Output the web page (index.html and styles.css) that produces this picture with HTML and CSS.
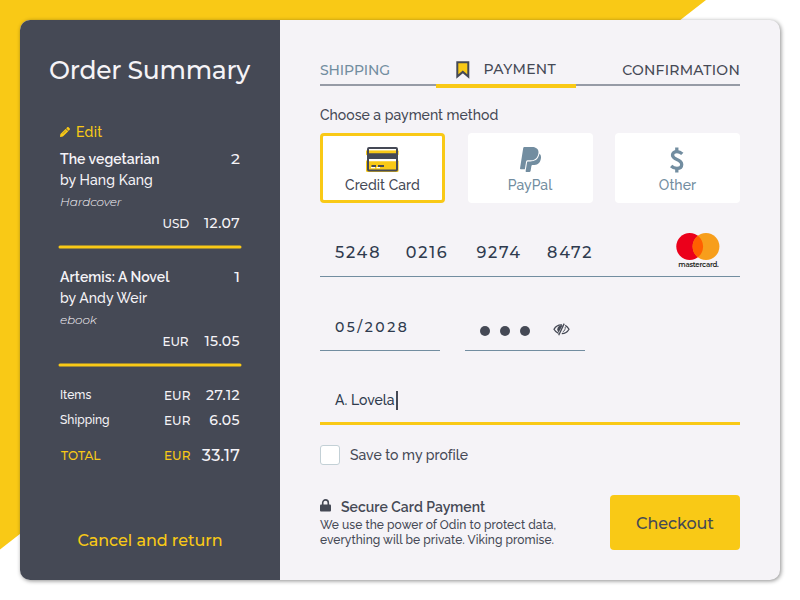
FILE: index.html
```html
<!DOCTYPE html>
<html lang="en">
<head>
<meta charset="utf-8">
<title>Checkout</title>
<link rel="stylesheet" href="styles.css">
</head>
<body>
<div class="card">
  <aside class="summary">
    <h1 class="title">Order Summary</h1>
    <a class="edit">
      <svg width="10" height="10" viewBox="0 0 512 512" fill="currentColor"><path d="M497.9 142.1l-46.1 46.1c-4.7 4.7-12.3 4.7-17 0l-111-111c-4.7-4.7-4.7-12.3 0-17l46.1-46.1c18.7-18.7 49.1-18.7 67.9 0l60.1 60.1c18.8 18.7 18.8 49.1 0 67.9zM284.2 99.8L21.6 362.4.4 483.9c-2.9 16.4 11.4 30.6 27.8 27.8l121.5-21.3 262.6-262.6c4.7-4.7 4.7-12.3 0-17l-111-111c-4.8-4.7-12.4-4.7-17.1 0z"/><path d="M145 345l165-165" stroke="#454955" stroke-width="22"/></svg>
      <span>Edit</span>
    </a>
    <section class="item">
      <div class="item-head"><span class="book">The vegetarian</span><span class="qty">2</span></div>
      <div class="author">by Hang Kang</div>
      <div class="format">Hardcover</div>
      <div class="price"><span class="cur">USD</span><span class="amount">12.07</span></div>
    </section>
    <section class="item">
      <div class="item-head"><span class="book">Artemis: A Novel</span><span class="qty">1</span></div>
      <div class="author">by Andy Weir</div>
      <div class="format">ebook</div>
      <div class="price"><span class="cur">EUR</span><span class="amount">15.05</span></div>
    </section>
    <div class="totals">
      <div class="row"><span class="row-label">Items</span><span class="cur">EUR</span><span class="amount">27.12</span></div>
      <div class="row"><span class="row-label">Shipping</span><span class="cur">EUR</span><span class="amount">6.05</span></div>
      <div class="row total"><span class="total-label">TOTAL</span><span class="cur">EUR</span><span class="amount">33.17</span></div>
    </div>
    <a class="cancel">Cancel and return</a>
  </aside>
  <main class="main">
    <nav class="tabs">
      <div class="tab done">SHIPPING</div>
      <div class="tab active">
        <svg width="14" height="18" viewBox="0 0 14 18"><path d="M1.3 1.3h11v14.2l-5.5-4.6-5.5 4.6z" fill="#f9c916" stroke="#454955" stroke-width="2"/></svg>
        <span>PAYMENT</span>
      </div>
      <div class="tab next">CONFIRMATION</div>
    </nav>
    <div class="choose">Choose a payment method</div>
    <div class="methods">
      <div class="method selected">
        <svg width="33" height="25" viewBox="0 0 33 25">
          <rect x="0" y="3.3" width="32.6" height="5" rx="1" fill="#f9c916"/>
          <rect x="0" y="13" width="32.6" height="12" rx="1.5" fill="#f9c916"/>
          <rect x="2" y="1" width="29" height="22.5" rx="1" fill="none" stroke="#454955" stroke-width="2"/>
          <path d="M3 2h27v1.3H3zM3 12h27v2.2H3z" fill="#fff"/>
          <path d="M2 6.3h29v5.7H2zM5.5 18h4.5v2H5.5zM12 18h6v2h-6z" fill="#454955"/>
          <path d="M5 20h4v1.3H5zM10.5 20h3.5v1.3h-3.5z" fill="#fff"/>
        </svg>
        <span class="method-name">Credit Card</span>
      </div>
      <div class="method">
        <svg width="21" height="25" viewBox="0 29 384 454" fill="currentColor"><path d="M111.4 295.9c-3.5 19.2-17.4 108.7-21.5 134-.3 1.8-1 2.5-3 2.5H12.3c-7.6 0-13.1-6.6-12.1-13.9L58.8 46.6c1.5-9.6 10.1-16.9 20-16.9 152.3 0 165.1-3.7 204 11.4 60.1 23.3 65.6 79.5 44 140.3-21.5 62.6-72.5 89.5-140.1 90.3-43.4.7-69.5-7-75.3 24.2zM357.1 152c-1.8-1.3-2.5-1.8-3 1.3-2 11.4-5.1 22.5-8.8 33.6-39.9 113.8-150.5 103.9-204.5 103.9-6.1 0-10.1 3.3-10.9 9.4-22.6 140.4-27.1 169.7-27.1 169.7-1 7.1 3.5 12.9 10.6 12.9h63.5c8.6 0 15.7-6.3 17.4-14.9.7-5.4-1.1 6.1 14.4-91.3 4.6-22 14.3-19.7 29.3-19.7 71 0 126.4-28.8 142.9-112.3 6.5-34.8 4.6-71.4-23.8-92.6z"/></svg>
        <span class="method-name">PayPal</span>
      </div>
      <div class="method">
        <svg class="dollar" width="14" height="26" viewBox="0 0 14 26" fill="none" stroke="currentColor" stroke-width="3.3"><path d="M12.3 6.9C10.7 5.4 9 4.7 6.9 4.7 4.3 4.7 2.5 6 2.5 8.1c0 5.2 9.2 3.6 9.2 9.4 0 2.5-2 3.9-4.7 3.9-2.4 0-4.2-.8-5.9-2.4"/><path d="M6.8 .5v4M6.8 21.5v4"/></svg>
        <span class="method-name">Other</span>
      </div>
    </div>
    <div class="field number">
      <div class="digits"><span>5248</span><span>0216</span><span>9274</span><span>8472</span></div>
      <svg class="mastercard" width="44" height="37" viewBox="0 0 44 37">
        <circle cx="13.7" cy="13.5" r="13.4" fill="#eb001b"/>
        <circle cx="30" cy="13.5" r="13.4" fill="#f79e1b"/>
        <path d="M21.85 2.87a13.4 13.4 0 0 1 0 21.26a13.4 13.4 0 0 1 0-21.26z" fill="#ff5f00"/>
        <text x="2.3" y="34" textLength="40.5" class="mc-text">mastercard.</text>
      </svg>
    </div>
    <div class="pair">
      <div class="field date">05/2028</div>
      <div class="field cvv">
        <i class="dot"></i><i class="dot"></i><i class="dot"></i>
        <svg class="eye" width="17" height="13" viewBox="0 0 17 13" fill="none" stroke="#454955">
          <path d="M9 2C5.5 1.7 2.6 3.6 1 6.3c1 1.9 2.5 3.3 4.6 4.1M12.2 2.4c1.7.8 2.9 2.2 3.8 3.9-1.5 2.7-4 4.3-7.2 4.4" stroke-width="1.3"/>
          <path d="M9.6 2.2C6.3 1.9 4.3 3.8 4.3 6.2c0 1.3.5 2.2 1.5 3z" fill="#454955" stroke="none"/>
          <path d="M11.2.6L5.7 12.3" stroke-width="1.3"/>
          <path d="M12.2 4c.3 2-.7 4-2.5 5" stroke-width=".9"/>
        </svg>
      </div>
    </div>
    <div class="field name"><span>A. Lovela</span><i class="caret"></i></div>
    <label class="save"><i class="box"></i><span>Save to my profile</span></label>
    <div class="footer">
      <div class="secure">
        <div class="secure-head">
          <svg width="11" height="13" viewBox="0 0 11 13"><path d="M2.7 6V3.7a2.8 2.8 0 0 1 5.6 0V6" fill="none" stroke="#454955" stroke-width="1.6"/><rect x="0" y="5.6" width="11" height="7" rx="1" fill="#454955"/></svg>
          <span>Secure Card Payment</span>
        </div>
        <p class="note">We use the power of Odin to protect data,<br>everything will be private. Viking promise.</p>
      </div>
      <button class="checkout">Checkout</button>
    </div>
  </main>
</div>
</body>
</html>
```
FILE: styles.css
```css
* { box-sizing: border-box; }
body {
  margin: 0;
  height: 600px;
  padding: 20px;
  overflow: hidden;
  background: #fff;
  color: #454955;
  font: 500 14px/20px Raleway, Lato, sans-serif;
  letter-spacing: .02px;
  white-space: nowrap;
}
body::before {
  content: "";
  position: absolute;
  inset: 0;
  z-index: -1;
  background: #f9c916;
  clip-path: polygon(0 0, 706px 0, 0 549.5px);
}
svg { display: block; flex: none; }
span { display: block; }
.card {
  display: flex;
  height: 560px;
  border-radius: 10px;
  overflow: hidden;
  background: #f5f3f7;
  box-shadow: 1px 1px 4px rgba(0, 0, 0, .45);
}
.title, .cur, .amount, .qty, .total-label, .cancel, .tab, .digits, .date, .checkout {
  font-family: Montserrat, Inter, sans-serif;
  font-weight: 500;
}

/* Order summary */
.summary {
  width: 260px;
  padding: 30px 40px 0;
  background: #454955;
  color: #f5f3f7;
}
.title {
  margin: 0 -12px 32px -11px;
  font-size: 25px;
  line-height: 41px;
  height: 40px;
  letter-spacing: -.28px;
}
.edit {
  display: flex;
  align-items: center;
  gap: 6px;
  height: 20px;
  margin-bottom: 7px;
  color: #f9c916;
  letter-spacing: .3px;
}
.item { line-height: 21px; height: 97px; margin-bottom: 21px; }
.item::after {
  content: "";
  display: block;
  height: 2px;
  margin: 12px -1px 0;
  border-radius: 1px;
  background: #f9c916;
  box-shadow: 0 0 0 .5px #f9c916;
}
.item-head { display: flex; justify-content: space-between; }
.book { font-weight: 600; letter-spacing: .05px; }
.author { letter-spacing: .1px; }
.format {
  font: italic 300 12px/21px Montserrat, Lato, sans-serif;
  letter-spacing: -.1px;
}
.qty { font-size: 15.5px; line-height: 20px; }
.price { display: flex; justify-content: space-between; margin-top: 1px; padding-left: 102.5px; }
.cur { font-size: 12px; letter-spacing: -.1px; }
.amount { letter-spacing: .4px; }
.totals { margin-top: -2px; }
.row { display: grid; grid-template-columns: 104px 1fr auto; height: 25px; line-height: 25px; }
.row .cur { letter-spacing: .05px; }
.row-label { font-size: 12px; line-height: 24px; }
.total { margin-top: 10px; }
.total-label { padding-left: 1px; }
.total-label, .total .cur { color: #f9c916; font-size: 12px; }
.total .amount { font-size: 16px; letter-spacing: .2px; }
.cancel {
  display: block;
  margin: 63px 0 0;
  color: #f9c916;
  text-align: center;
  font-size: 16px;
  line-height: 20px;
  letter-spacing: -.06px;
}

/* Payment */
.main { flex: 1; padding: 35px 40px 0; }
.tabs {
  display: grid;
  grid-template-columns: 116px 140px 164px;
  height: 31px;
  border-bottom: 2px solid #969ba6;
  line-height: 30px;
}
.done { color: #728da0; letter-spacing: -.1px; }
.active {
  position: relative;
  display: flex;
  gap: 13.5px;
  padding-left: 20px;
  line-height: 28px;
  letter-spacing: .35px;
}
.active svg { margin-top: 6px; }
.active::after {
  content: "";
  position: absolute;
  left: 0;
  right: 0;
  bottom: -3px;
  height: 4px;
  background: #f9c916;
}
.next { text-align: right; letter-spacing: .25px; }
.choose { margin-top: 19px; }
.methods { display: flex; justify-content: space-between; height: 70px; margin-top: 8px; }
.method {
  display: flex;
  flex-direction: column;
  align-items: center;
  justify-content: space-between;
  width: 125px;
  padding: 14px 0 8px;
  border-radius: 4px;
  background: #fff;
  color: #728da0;
}
.selected { padding: 11px 0 5px; border: 3px solid #f9c916; color: #454955; }
.method-name { letter-spacing: .05px; }
.dollar { margin-right: 2px; }
.field { border-bottom: 1px solid #728da0; color: #2f3b4e; }
.number {
  display: flex;
  justify-content: space-between;
  height: 49px;
  margin-top: 25px;
  padding: 0 20px 0 15px;
}
.digits {
  display: grid;
  grid-template-columns: repeat(4, 70.7px);
  font-size: 16px;
  line-height: 49px;
  letter-spacing: 1.8px;
}
.mastercard { margin-top: 5px; }
.mc-text { font: 600 7px Montserrat, Lato, sans-serif; fill: #231f20; }
.pair { display: flex; gap: 25px; height: 47px; margin-top: 27px; }
.pair .field { width: 120px; padding-left: 15px; }
.pair .date { line-height: 46px; letter-spacing: 2.5px; }
.cvv { display: flex; align-items: center; gap: 10px; padding-top: 8px; }
.dot { width: 10px; height: 10px; border-radius: 50%; background: #454955; }
.eye { margin: -4px 0 0 13px; }
.name {
  display: flex;
  align-items: center;
  height: 47px;
  margin-top: 27px;
  padding-left: 15px;
  border-bottom: 3px solid #f9c916;
}
.caret { width: 2px; height: 19px; margin-left: 1px; background: #454955; }
.save { display: flex; gap: 10px; margin-top: 20px; }
.box { width: 20px; height: 20px; border: 1px solid #c3d0d6; border-radius: 3px; background: #fff; }
.footer { display: flex; justify-content: space-between; height: 55px; margin-top: 30px; }
.secure { padding-top: 2px; }
.secure-head { display: flex; gap: 10px; font-weight: 600; }
.secure-head svg { margin-top: 2px; }
.note { margin: 1px 0 0; font-size: 12px; line-height: 15px; letter-spacing: .05px; }
.checkout {
  width: 130px;
  border: 0;
  border-radius: 4px;
  background: #f9c916;
  color: #454955;
  font-size: 16px;
  letter-spacing: -.05px;
  padding: 1px 0 0;
}
```
